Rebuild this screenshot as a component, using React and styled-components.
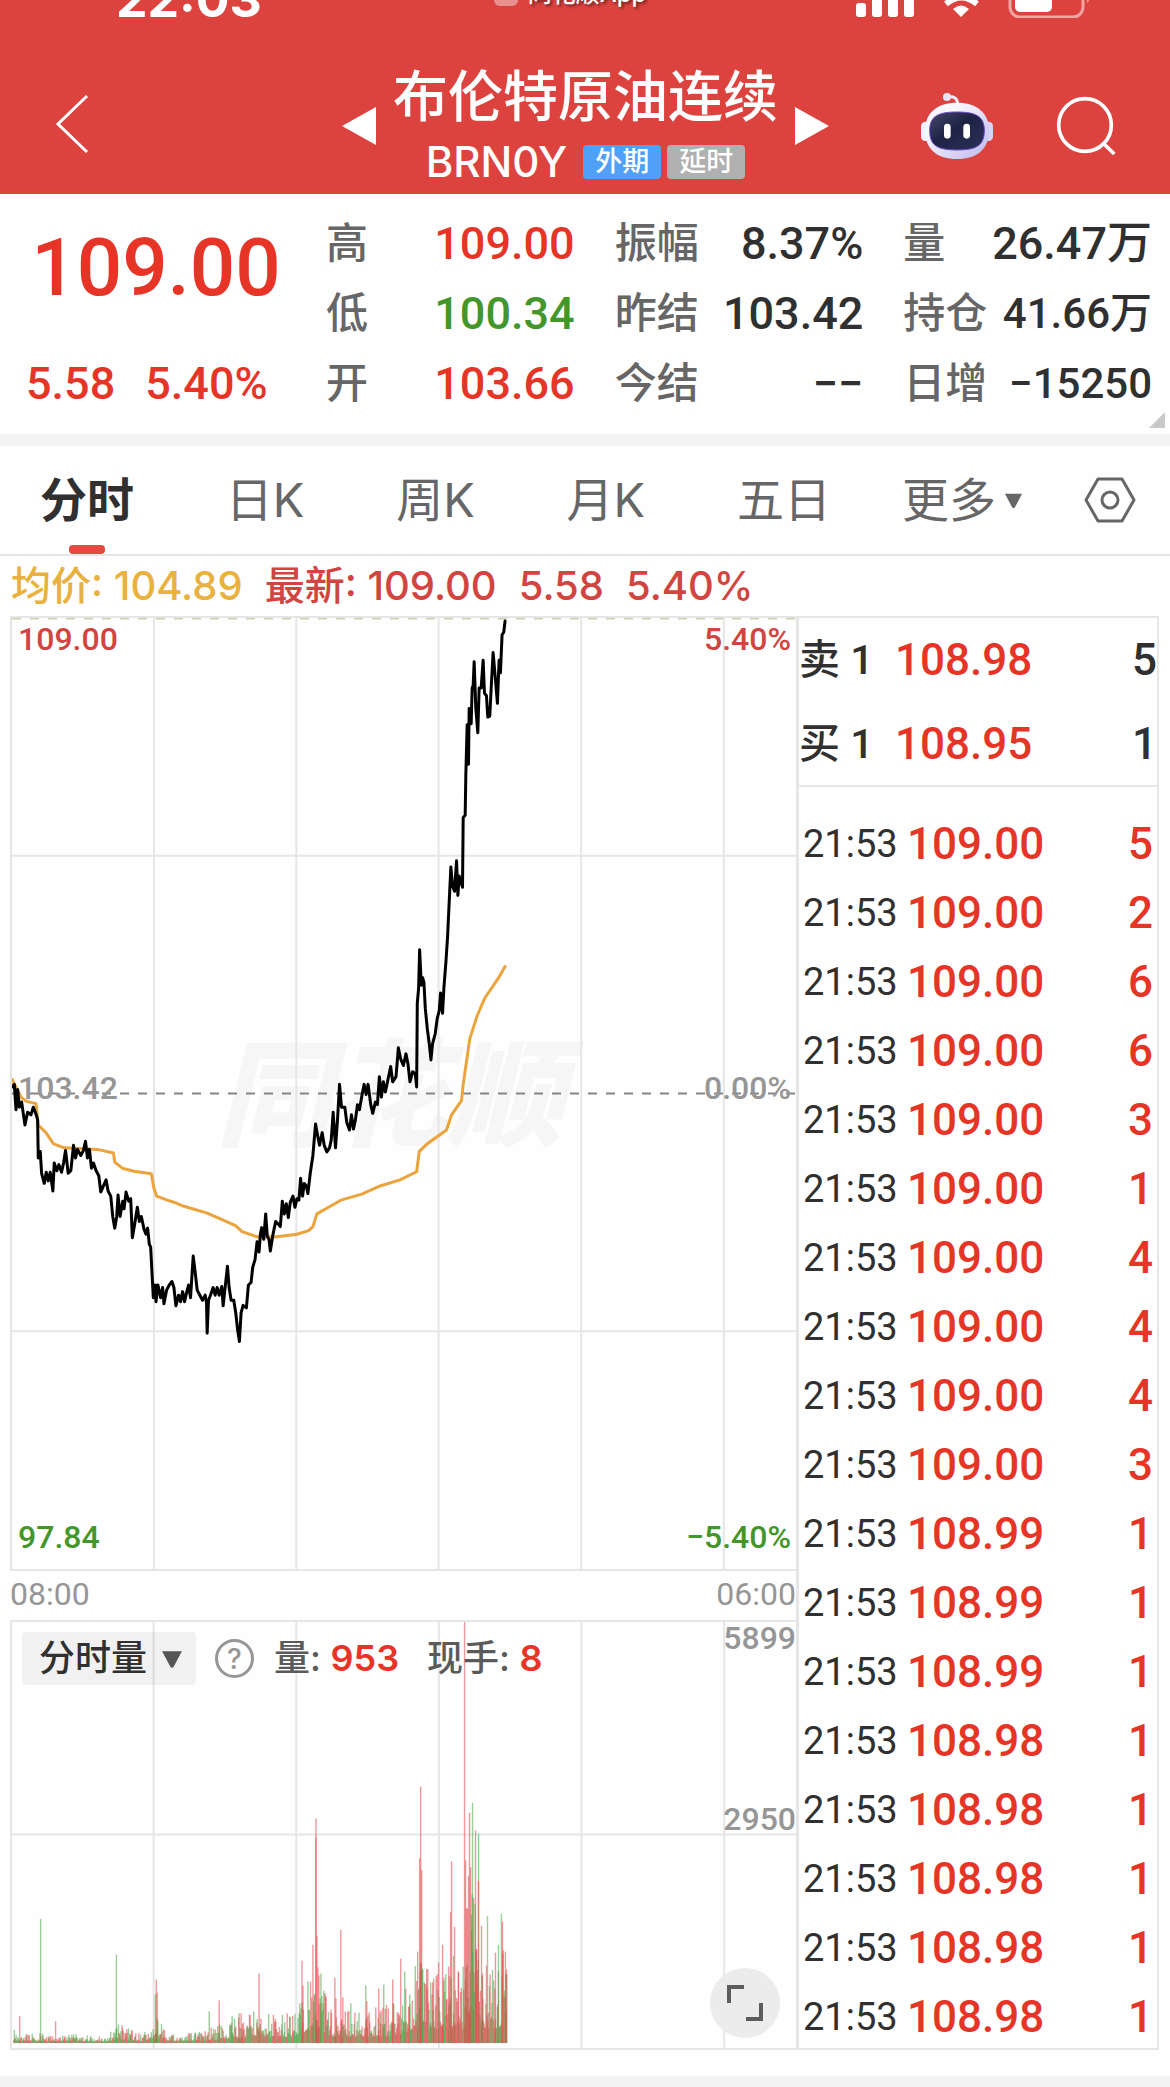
// src/App.jsx
import React, { useState } from 'react';
import styled, { createGlobalStyle, ThemeProvider } from 'styled-components';

const theme = {
  colors: {
    brand: '#dc433f',
    up: '#e63527',
    upSoft: '#d2443f',
    down: '#43962a',
    average: '#e9b13d',
    text: '#303030',
    label: '#666666',
    muted: '#969696',
    line: '#e6e6e6',
    strip: '#f4f4f4',
  },
  fonts: {
    number: "Roboto, 'Noto Sans CJK SC', sans-serif",
    text: "Inter, 'Noto Sans CJK SC', sans-serif",
  },
};

const GlobalStyle = createGlobalStyle`
  * {
    box-sizing: border-box;
  }

  body {
    margin: 0;
    background: #fefefe;
    color: ${theme.colors.text};
    font-family: ${theme.fonts.text};
  }

  button, select {
    margin: 0;
    padding: 0;
    border: 0;
    background: none;
    color: inherit;
    font: inherit;
    cursor: pointer;
  }

  svg {
    display: block;
  }

  table {
    width: 100%;
    border-collapse: collapse;
  }

  td, th {
    padding: 0;
    text-align: left;
  }

  dl, dd, h1, p {
    margin: 0;
  }
`;

/* ---------- header ---------- */

const Header = styled.header`
  background: ${props => props.theme.colors.brand};
  color: #fff;
`;

const StatusBar = styled.div`
  display: grid;
  grid-template-columns: 1fr auto 1fr;
  align-content: end;
  align-items: end;
  height: 24px;
  padding: 0 78px 0 116px;
  overflow: hidden;
`;

const Clock = styled.span`
  font-size: 50px;
  font-weight: 700;
  line-height: 50px;
`;

const SourceApp = styled.span`
  display: flex;
  align-items: center;
  gap: 10px;
  margin-right: 68px;
  padding-bottom: 16px;
  font-size: 24px;
  font-weight: 500;
  line-height: 28px;
  text-shadow: 2px 2px 3px rgba(0, 0, 0, 0.5);

  i {
    width: 24px;
    height: 24px;
    border-radius: 6px;
    background: #e98f8c;
  }
`;

const StatusIcons = styled.div`
  display: flex;
  justify-content: flex-end;
  padding-bottom: 6px;
`;

const NavBar = styled.div`
  display: grid;
  grid-template-columns: 1fr auto 1fr;
  align-items: center;
  height: 170px;
  padding: 34px 53px 0 54px;
`;

const IconButton = styled.button`
  display: inline-flex;
  align-items: center;
  justify-content: center;
`;

const Instrument = styled.div`
  display: flex;
  align-items: center;
  gap: 17px;
`;

const InstrumentName = styled.div`
  padding-bottom: 11px;
  text-align: center;

  h1 {
    margin-bottom: 15px;
    font-size: 55px;
    font-weight: 500;
    line-height: 68px;
  }
`;

const CodeLine = styled.div`
  display: flex;
  align-items: center;
  justify-content: center;
  gap: 6px;
  height: 34px;
`;

const Code = styled.span`
  margin-right: 10px;
  font-size: 42px;
  font-weight: 500;
  line-height: 34px;
`;

const Badge = styled.span`
  padding: 0 12px;
  border-radius: 4px;
  background: ${props => props.$color};
  font-size: 27px;
  font-weight: 500;
  line-height: 34px;
`;

const NavActions = styled.div`
  display: flex;
  align-items: center;
  justify-content: flex-end;
  gap: 61px;
`;

/* ---------- quote summary ---------- */

const Summary = styled.section`
  position: relative;
  display: grid;
  grid-template-columns: 286px repeat(3, 1fr);
  column-gap: 40px;
  padding: 15px 18px 15px 0;
  font-family: ${props => props.theme.fonts.number};
`;

const PriceBlock = styled.div`
  display: flex;
  flex-direction: column;
  justify-content: space-between;
  align-items: center;
  padding-left: 26px;
  color: ${props => props.theme.colors.up};
  font-weight: 500;
`;

const LastPrice = styled.strong`
  font-size: 80px;
  font-weight: 500;
  line-height: 118px;
`;

const Change = styled.div`
  display: flex;
  align-self: flex-start;
  gap: 30px;
  font-size: 45px;
  line-height: 70px;
`;

const StatRow = styled.div`
  display: flex;
  justify-content: space-between;
  line-height: 70px;
  white-space: nowrap;

  dt {
    color: ${props => props.theme.colors.label};
    font-size: 42px;
    font-weight: 500;
  }

  dd {
    color: ${props => props.theme.colors[props.$tone || 'text']};
    font-size: ${props => (props.$compact ? 42 : 45)}px;
    font-weight: 500;
  }
`;

const ExpandCorner = styled.span`
  position: absolute;
  right: 5px;
  bottom: 6px;
  border-bottom: 16px solid #c9c9c9;
  border-left: 16px solid transparent;
`;

const Strip = styled.div`
  height: 12px;
  background: ${props => props.theme.colors.strip};
`;

/* ---------- period tabs ---------- */

const TabBar = styled.nav`
  display: flex;
  align-items: center;
  height: 110px;
  padding: 0 34px 0 40px;
  border-bottom: 2px solid ${props => props.theme.colors.line};
`;

const TabList = styled.div`
  display: flex;
  flex: 1;
  justify-content: space-between;
`;

const Tab = styled.button`
  position: relative;
  color: ${props => props.theme.colors[props.$active ? 'text' : 'label']};
  font-size: 47px;
  font-weight: ${props => (props.$active ? 700 : 400)};
  line-height: 108px;

  &::after {
    content: '';
    display: ${props => (props.$active ? 'block' : 'none')};
    position: absolute;
    bottom: 0;
    left: calc(50% - 18px);
    width: 36px;
    height: 9px;
    border-radius: 4px;
    background: #e54a42;
  }
`;

const MoreButton = styled(Tab)`
  display: flex;
  align-items: center;
  gap: 8px;
  margin: 0 61px 0 71px;
`;

/* ---------- chart column ---------- */

const Legend = styled.p`
  display: flex;
  gap: 22px;
  height: 60px;
  padding: 0 11px;
  color: ${props => props.theme.colors.upSoft};
  font-size: 40px;
  font-weight: 500;
  line-height: 60px;
  white-space: nowrap;
`;

const AverageText = styled.span`
  color: ${props => props.theme.colors.average};
`;

const Body = styled.main`
  display: grid;
  grid-template-columns: minmax(0, 1fr) 363px;
  margin: 0 11px 26px 10px;
`;

const ChartColumn = styled.div`
  font-family: ${props => props.theme.fonts.number};
`;

const ChartFrame = styled.div`
  position: relative;
  height: ${props => props.$height}px;
  border: solid ${props => props.theme.colors.line};
  border-width: 2px 0 2px 2px;

  > svg {
    width: 100%;
    height: 100%;
  }
`;

const Watermark = styled.span`
  position: absolute;
  top: 44%;
  left: 26%;
  color: #f6f6f6;
  font-family: 'Noto Sans CJK SC', sans-serif;
  font-size: 116px;
  font-style: italic;
  font-weight: 900;
  line-height: 100px;
`;

// keeps the lines above the watermark
const ChartLayer = styled.div`
  position: relative;
  height: 100%;

  svg {
    width: 100%;
    height: 100%;
  }
`;

const AxisLabel = styled.span`
  position: absolute;
  ${props => props.$side}: ${props => props.$inset}px;
  ${props => props.$edge || 'top'}: ${props => props.$offset};
  color: ${props => props.theme.colors[props.$tone || 'muted']};
  font-size: 32px;
  font-weight: 500;
  line-height: 32px;
`;

const TimeAxis = styled.div`
  display: flex;
  justify-content: space-between;
  height: 49px;
  color: ${props => props.theme.colors.muted};
  font-size: 32px;
  line-height: 46px;
`;

const VolumeTools = styled.div`
  position: absolute;
  top: 10px;
  left: 10px;
  display: flex;
  align-items: center;
  height: 53px;
  color: #5a5a5a;
  font-family: ${props => props.theme.fonts.text};
  font-size: 36px;
  font-weight: 500;
  line-height: 53px;
  white-space: nowrap;

  p {
    margin-left: 20px;
  }

  p + p {
    margin-left: 28px;
  }

  b {
    color: ${props => props.theme.colors.up};
    font-weight: 600;
  }
`;

const SelectBox = styled.label`
  display: flex;
  align-items: center;
  height: 53px;
  margin-right: 19px;
  padding: 0 13px 0 17px;
  border-radius: 4px;
  background: rgba(0, 0, 0, 0.05);
  color: ${props => props.theme.colors.text};

  select {
    margin-right: 13px;
    appearance: none;
    outline: none;
    font-weight: 500;
  }
`;

const HelpButton = styled.button`
  width: 39px;
  height: 39px;
  border: 3px solid ${props => props.theme.colors.muted};
  border-radius: 50%;
  color: ${props => props.theme.colors.muted};
  font-size: 28px;
  line-height: 32px;
`;

const ExpandButton = styled.button`
  position: absolute;
  right: 16px;
  bottom: 10px;
  display: flex;
  align-items: center;
  justify-content: center;
  width: 70px;
  height: 70px;
  border-radius: 50%;
  background: #ececec;
`;

/* ---------- order book ---------- */

const Book = styled.aside`
  border: 2px solid ${props => props.theme.colors.line};
  border-width: 2px 2px 2px 3px;
  font-family: ${props => props.theme.fonts.number};
  font-weight: 500;
`;

const QuoteTable = styled.table`
  border-bottom: 2px solid ${props => props.theme.colors.line};

  tr {
    height: 84px;
    font-size: 44px;
  }

  th {
    width: 96px;
    font-size: 41px;
    font-weight: 500;
    line-height: 44px;
  }

  td:last-child {
    text-align: right;
  }
`;

const TradeTable = styled.table`
  margin: 22px 0 -4px;
  color: ${props => props.theme.colors.up};

  tr {
    height: 69px;
    font-size: 44px;
  }

  td:first-child {
    width: 108px;
    padding-left: 4px;
    color: ${props => props.theme.colors.text};
    font-size: 38px;
    font-weight: 400;
  }

  td:last-child {
    padding-right: 4px;
    text-align: right;
  }
`;

const QuotePrice = styled.td`
  color: ${props => props.theme.colors.up};
`;

/* ---------- data ---------- */

const STATS = [
  [
    { label: '高', value: '109.00', tone: 'up' },
    { label: '低', value: '100.34', tone: 'down' },
    { label: '开', value: '103.66', tone: 'up' },
  ],
  [
    { label: '振幅', value: '8.37%' },
    { label: '昨结', value: '103.42' },
    { label: '今结', value: '−−' },
  ],
  [
    { label: '量', value: '26.47万' },
    { label: '持仓', value: '41.66万', compact: true },
    { label: '日增', value: '−15250', compact: true },
  ],
];

const TABS = ['分时', '日K', '周K', '月K', '五日'];

const QUOTES = [
  { side: '卖 1', price: '108.98', size: 5 },
  { side: '买 1', price: '108.95', size: 1 },
];

const TRADES = [
  ['109.00', 5], ['109.00', 2], ['109.00', 6], ['109.00', 6], ['109.00', 3], ['109.00', 1],
  ['109.00', 4], ['109.00', 4], ['109.00', 4], ['109.00', 3], ['108.99', 1], ['108.99', 1],
  ['108.99', 1], ['108.98', 1], ['108.98', 1], ['108.98', 1], ['108.98', 1], ['108.98', 1],
];

const PRICE_POINTS = `33,935 40,930 45,980 50,940 55,975 62,965 72,1010 80,985 90,990 97,975 106,990 110,1000
  112,1075 118,1062 122,1105 130,1125 136,1103 142,1120 148,1103 156,1140 160,1085 168,1100 174,1088 182,1103
  188,1085 194,1060 202,1105 210,1100 218,1050 224,1075 230,1058 240,1070 248,1060 254,1042 260,1075 266,1058
  272,1095 278,1085 286,1100 294,1110 300,1142 308,1130 316,1118 322,1140 330,1150 336,1190 342,1213 348,1190
  352,1148 358,1190 366,1160 370,1175 376,1142 384,1160 390,1155 395,1232 402,1205 410,1172 416,1200 422,1190
  430,1215 436,1225 441,1213 446,1245 450,1250 454,1300 458,1350 464,1325 466,1358 472,1325 480,1350 486,1330
  490,1362 498,1335 506,1325 514,1318 520,1330 526,1366 534,1345 540,1358 546,1338 552,1358 558,1340 564,1325
  570,1350 578,1268 584,1300 590,1335 598,1345 606,1355 614,1345 618,1360 620,1420 624,1355 630,1345 638,1330
  644,1345 650,1330 656,1345 664,1328 668,1366 674,1330 681,1288 686,1330 692,1355 700,1355 706,1380 712,1415
  717,1436 722,1380 728,1365 738,1370 744,1325 752,1320 757,1290 764,1275 770,1240 776,1260 780,1225 784,1212
  790,1235 796,1185 801,1230 806,1235 810,1258 818,1225 826,1200 834,1205 840,1210 846,1160 852,1185 858,1165
  864,1192 870,1162 878,1150 884,1172 890,1155 896,1158 901,1115 907,1150 912,1125 918,1130 923,1145 930,1105
  938,1070 946,1008 952,1030 958,1050 966,1025 972,1050 980,1063 988,1055 993,1040 999,985 1006,1055 1012,1000
  1018,930 1024,975 1034,975 1040,1005 1048,1020 1054,990 1060,1018 1066,1000 1072,970 1078,980 1086,950
  1092,930 1098,950 1104,930 1112,970 1118,987 1126,965 1132,970 1138,915 1144,955 1150,925 1156,945 1164,920
  1172,895 1178,925 1188,915 1195,858 1202,880 1210,893 1218,870 1224,890 1230,925 1238,905 1246,910 1250,935
  1252,770 1256,740 1259,665 1264,735 1268,720 1272,730 1276,780 1282,820 1288,850 1293,882 1298,850 1306,830
  1312,800 1318,785 1322,750 1328,790 1332,740 1338,690 1343,640 1348,570 1353,502 1358,540 1364,550 1370,490
  1374,558 1378,520 1388,542 1390,405 1396,400 1398,320 1402,222 1406,300 1408,190 1414,220 1417,150 1420,145
  1423,98 1428,190 1434,238 1438,150 1444,150 1450,95 1454,160 1460,165 1464,207 1470,205 1475,140 1480,80
  1486,125 1493,180 1498,95 1502,120 1507,45 1512,40 1516,18`;

const AVERAGE_POINTS = `33,920 60,955 75,963 105,968 112,1010 135,1025 158,1047 190,1055 290,1058 338,1065
  342,1083 365,1095 400,1101 452,1106 460,1135 468,1150 500,1158 520,1162 550,1170 618,1183 660,1195 705,1208
  725,1220 770,1230 830,1230 890,1225 925,1218 938,1210 950,1185 985,1172 1022,1158 1085,1146 1140,1130
  1200,1118 1250,1102 1258,1062 1280,1048 1340,1020 1355,990 1385,962 1390,930 1410,840 1432,795 1455,760
  1495,722 1516,698`;

// [minute position, height, 1 = up / 0 = down]
const VOLUME_PEAKS = [
  [7, 27, 1], [28, 125, 0], [43, 22, 1], [104, 89, 0], [143, 49, 0], [144, 64, 1], [145, 51, 0],
  [197, 32, 0], [207, 43, 1], [220, 27, 0], [227, 30, 0], [229, 30, 1], [247, 70, 1], [290, 83, 1],
  [291, 58, 1], [296, 62, 0], [301, 99, 1], [304, 226, 1], [304, 207, 1], [305, 108, 1], [306, 76, 1],
  [307, 68, 1], [309, 70, 0], [323, 66, 1], [324, 45, 1], [329, 114, 1], [331, 46, 1], [339, 40, 0],
  [354, 58, 0], [355, 42, 1], [367, 55, 1], [372, 59, 0], [381, 64, 1], [389, 85, 1], [393, 72, 0],
  [398, 49, 0], [406, 92, 1], [408, 186, 1], [409, 258, 1], [410, 174, 1], [411, 75, 0], [419, 61, 0],
  [422, 65, 1], [427, 81, 1], [431, 99, 1], [432, 63, 0], [437, 77, 1], [439, 132, 1], [440, 183, 1],
  [442, 88, 0], [443, 117, 1], [447, 71, 1], [453, 424, 1], [454, 184, 1], [455, 136, 1], [456, 135, 1],
  [457, 168, 1], [458, 232, 1], [459, 177, 1], [460, 129, 0], [461, 242, 0], [462, 146, 1],
  [464, 214, 1], [465, 94, 1], [467, 211, 0], [467, 163, 1], [470, 118, 1], [471, 70, 1], [476, 128, 0],
  [484, 91, 1], [487, 99, 0], [490, 130, 0], [491, 122, 1], [494, 92, 1], [495, 74, 1],
];

const VOLUME_TREND = [
  [0, 12], [12, 7], [40, 8], [90, 5], [108, 15], [130, 6], [144, 24], [155, 6], [190, 9], [225, 19],
  [248, 26], [280, 22], [304, 62], [318, 26], [350, 24], [390, 32], [408, 70], [430, 52], [442, 62],
  [450, 48], [460, 125], [474, 58], [486, 56], [496, 86],
];

function trendAt(x) {
  const i = VOLUME_TREND.findIndex(([px]) => px >= x);
  if (i <= 0) return VOLUME_TREND[0][1];
  const [x0, y0] = VOLUME_TREND[i - 1];
  const [x1, y1] = VOLUME_TREND[i];
  return y0 + ((y1 - y0) * (x - x0)) / (x1 - x0);
}

function buildVolume() {
  let seed = 29;
  const next = () => {
    seed = (seed * 16807) % 2147483647;
    return seed / 2147483647;
  };
  const bars = [];
  for (let x = 1; x < 496; x += 0.6) {
    const r = next();
    bars.push([x, Math.max(1, trendAt(x) * (0.25 + r * r * 1.1)), next() > 0.5 ? 1 : 0]);
  }
  return bars.concat(VOLUME_PEAKS);
}

const VOLUME = buildVolume();

/* ---------- drawings ---------- */

function Caret({ size, color = '#666' }) {
  return (
    <svg width={size} height={size} viewBox="0 0 20 20" aria-hidden="true">
      <path d="M1 3h18L11.500 17q-1.500 2-3 0z" fill={color} />
    </svg>
  );
}

function Robot() {
  return (
    <svg width="74" height="68" viewBox="120 93 222 204" aria-hidden="true">
      <defs>
        <linearGradient id="shell" x1="0" y1="0" x2="1" y2="1">
          <stop offset="0.3" stopColor="#f8f6ff" />
          <stop offset="1" stopColor="#b9b8ee" />
        </linearGradient>
        <linearGradient id="visor" x1="0" y1="0" x2="1" y2="1">
          <stop offset="0" stopColor="#454a6b" />
          <stop offset="0.45" stopColor="#1e2345" />
          <stop offset="1" stopColor="#2b3159" />
        </linearGradient>
      </defs>
      <path d="M205 108q26-4 28 20" fill="none" stroke="#eeeaf8" strokeWidth="9" />
      <circle cx="201" cy="108" r="12" fill="#e9e4f5" />
      <rect x="123" y="182" width="34" height="58" rx="13" fill="#f3f1ff" />
      <rect x="305" y="182" width="34" height="58" rx="13" fill="#d5d4f7" />
      <path d="M231 125c58 0 96 30 96 82 0 58-36 87-96 87s-96-29-96-87c0-52 38-82 96-82z" fill="url(#shell)" />
      <path
        d="M231 153c54 0 82 11 82 55 0 48-26 59-82 59s-82-11-82-59c0-44 28-55 82-55z"
        fill="url(#visor)"
        stroke="#6c48c9"
        strokeWidth="3"
      />
      <rect x="192" y="188" width="20" height="45" rx="10" fill="#fff" />
      <rect x="250" y="188" width="20" height="45" rx="10" fill="#fff" />
    </svg>
  );
}

function PhoneStatus() {
  return (
    <svg width="240" height="40" viewBox="852 -22 240 40" aria-hidden="true">
      <g fill="#fff">
        <rect x="856" y="3" width="10" height="14" rx="3" />
        <rect x="872" y="-4" width="10" height="21" rx="3" />
        <rect x="888" y="-11" width="10" height="28" rx="3" />
        <rect x="904" y="-18" width="10" height="35" rx="3" />
        <path d="M961 17l-8-8q8-7 16 0z" />
        <rect x="1015" y="-14" width="37" height="26" rx="5" />
      </g>
      <path d="M946 4q15-13 31 0" fill="none" stroke="#fff" strokeWidth="6" />
      <rect x="1010" y="-19" width="73" height="36" rx="10" fill="none" stroke="#f0a5a3" strokeWidth="3" />
      <path d="M1087-7q5 5 0 10z" fill="#f0a5a3" />
    </svg>
  );
}

function PriceChart() {
  return (
    <svg viewBox="33 12 2358 1872" preserveAspectRatio="none" role="img" aria-label="分时">
      <g stroke={theme.colors.line} strokeWidth="2">
        {[460, 888, 1316, 1745, 2174].map(x => (
          <path key={x} d={`M${x} 12V1884`} vectorEffect="non-scaling-stroke" />
        ))}
        {[480, 1416].map(y => (
          <path key={y} d={`M33 ${y}H2391`} vectorEffect="non-scaling-stroke" />
        ))}
      </g>
      <path d="M33 12H2391" stroke="#cfcfae" strokeWidth="3" strokeDasharray="9 9" vectorEffect="non-scaling-stroke" />
      <path d="M33 948H2391" stroke="#858585" strokeWidth="2" strokeDasharray="9 9" vectorEffect="non-scaling-stroke" />
      <g fill="none" strokeWidth="3" strokeLinejoin="round" strokeLinecap="round">
        <polyline points={AVERAGE_POINTS} stroke="#eba33c" vectorEffect="non-scaling-stroke" />
        <polyline points={PRICE_POINTS} stroke="#000" vectorEffect="non-scaling-stroke" />
      </g>
    </svg>
  );
}

function VolumeChart() {
  return (
    <svg viewBox="0 0 786 429" preserveAspectRatio="none" role="img" aria-label="分时量">
      <g stroke={theme.colors.line} strokeWidth="2">
        {[142, 285, 428, 571, 714].map(x => (
          <path key={x} d={`M${x} 0V429`} />
        ))}
        <path d="M0 214H786" />
      </g>
      {VOLUME.map(([x, height, up], i) => (
        <rect
          key={i}
          x={x}
          y={424 - height}
          width="1.4"
          height={height}
          fill={up ? '#e0474c' : '#4aa545'}
          fillOpacity="0.55"
        />
      ))}
    </svg>
  );
}

/* ---------- page ---------- */

function App() {
  const [tab, setTab] = useState('分时');

  return (
    <ThemeProvider theme={theme}>
      <GlobalStyle />
      <Header>
        <StatusBar>
          <Clock>22:03</Clock>
          <SourceApp><i />同花顺App</SourceApp>
          <StatusIcons><PhoneStatus /></StatusIcons>
        </StatusBar>
        <NavBar>
          <div>
            <IconButton aria-label="返回">
              <svg width="36" height="60" viewBox="0 0 36 60" fill="none" stroke="#fff" strokeWidth="3">
                <path d="M33 2L4 30l29 28" />
              </svg>
            </IconButton>
          </div>
          <Instrument>
            <IconButton aria-label="上一个">
              <svg width="34" height="38" viewBox="0 0 34 38"><path d="M34 0v38L0 19z" fill="#fff" /></svg>
            </IconButton>
            <InstrumentName>
              <h1>布伦特原油连续</h1>
              <CodeLine>
                <Code>BRN0Y</Code>
                <Badge $color="#50a0f8">外期</Badge>
                <Badge $color="#b0b0b0">延时</Badge>
              </CodeLine>
            </InstrumentName>
            <IconButton aria-label="下一个">
              <svg width="34" height="38" viewBox="0 0 34 38"><path d="M0 0v38l34-19z" fill="#fff" /></svg>
            </IconButton>
          </Instrument>
          <NavActions>
            <IconButton aria-label="助手"><Robot /></IconButton>
            <IconButton aria-label="搜索">
              <svg width="62" height="62" viewBox="525 105 186 186" fill="none" stroke="#fff" strokeWidth="11">
                <circle cx="615" cy="195" r="79" />
                <path d="M669 249l34 33" />
              </svg>
            </IconButton>
          </NavActions>
        </NavBar>
      </Header>

      <Summary>
        <PriceBlock>
          <LastPrice>109.00</LastPrice>
          <Change><span>5.58</span><span>5.40%</span></Change>
        </PriceBlock>
        {STATS.map((group, i) => (
          <dl key={i}>
            {group.map(stat => (
              <StatRow key={stat.label} $tone={stat.tone} $compact={stat.compact}>
                <dt>{stat.label}</dt>
                <dd>{stat.value}</dd>
              </StatRow>
            ))}
          </dl>
        ))}
        <ExpandCorner />
      </Summary>
      <Strip />

      <TabBar>
        <TabList>
          {TABS.map(name => (
            <Tab key={name} $active={name === tab} onClick={() => setTab(name)}>{name}</Tab>
          ))}
        </TabList>
        <MoreButton>更多<Caret size={19} /></MoreButton>
        <IconButton aria-label="设置">
          <svg width="52" height="46" viewBox="0 0 52 46" fill="none" stroke="#666" strokeWidth="3">
            <path d="M14 2h24l12 21-12 21H14L2 23z" strokeLinejoin="round" />
            <circle cx="26" cy="23" r="8" />
          </svg>
        </IconButton>
      </TabBar>

      <Legend>
        <AverageText>均价: 104.89</AverageText>
        <span>最新: 109.00</span>
        <span>5.58</span>
        <span>5.40%</span>
      </Legend>

      <Body>
        <ChartColumn>
          <ChartFrame $height={955}>
            <Watermark>同花顺</Watermark>
            <ChartLayer><PriceChart /></ChartLayer>
            <AxisLabel $side="left" $inset={6} $offset="5px" $tone="upSoft">109.00</AxisLabel>
            <AxisLabel $side="right" $inset={5} $offset="5px" $tone="upSoft">5.40%</AxisLabel>
            <AxisLabel $side="left" $inset={6} $offset="calc(50% - 22px)">103.42</AxisLabel>
            <AxisLabel $side="right" $inset={5} $offset="calc(50% - 22px)">0.00%</AxisLabel>
            <AxisLabel $side="left" $inset={6} $edge="bottom" $offset="16px" $tone="down">97.84</AxisLabel>
            <AxisLabel $side="right" $inset={5} $edge="bottom" $offset="16px" $tone="down">−5.40%</AxisLabel>
          </ChartFrame>
          <TimeAxis><span>08:00</span><span>06:00</span></TimeAxis>
          <ChartFrame $height={430}>
            <VolumeChart />
            <VolumeTools>
              <SelectBox>
                <select aria-label="指标" defaultValue="volume">
                  <option value="volume">分时量</option>
                </select>
                <Caret size={22} color="#555" />
              </SelectBox>
              <HelpButton aria-label="说明">?</HelpButton>
              <p>量: <b>953</b></p>
              <p>现手: <b>8</b></p>
            </VolumeTools>
            <AxisLabel $side="right" $inset={0} $offset="0px">5899</AxisLabel>
            <AxisLabel $side="right" $inset={0} $edge="bottom" $offset="50%">2950</AxisLabel>
            <ExpandButton aria-label="全屏">
              <svg width="38" height="38" viewBox="0 0 38 38" fill="none" stroke="#5c5c5c" strokeWidth="4">
                <path d="M3 19V3h15M20 35h15V19" />
              </svg>
            </ExpandButton>
          </ChartFrame>
        </ChartColumn>

        <Book>
          <QuoteTable>
            <tbody>
              {QUOTES.map(q => (
                <tr key={q.side}>
                  <th scope="row">{q.side}</th>
                  <QuotePrice>{q.price}</QuotePrice>
                  <td>{q.size}</td>
                </tr>
              ))}
            </tbody>
          </QuoteTable>
          <TradeTable>
            <tbody>
              {TRADES.map(([price, size], i) => (
                <tr key={i}>
                  <td>21:53</td>
                  <td>{price}</td>
                  <td>{size}</td>
                </tr>
              ))}
            </tbody>
          </TradeTable>
        </Book>
      </Body>
      <Strip />
    </ThemeProvider>
  );
}

export default App;
